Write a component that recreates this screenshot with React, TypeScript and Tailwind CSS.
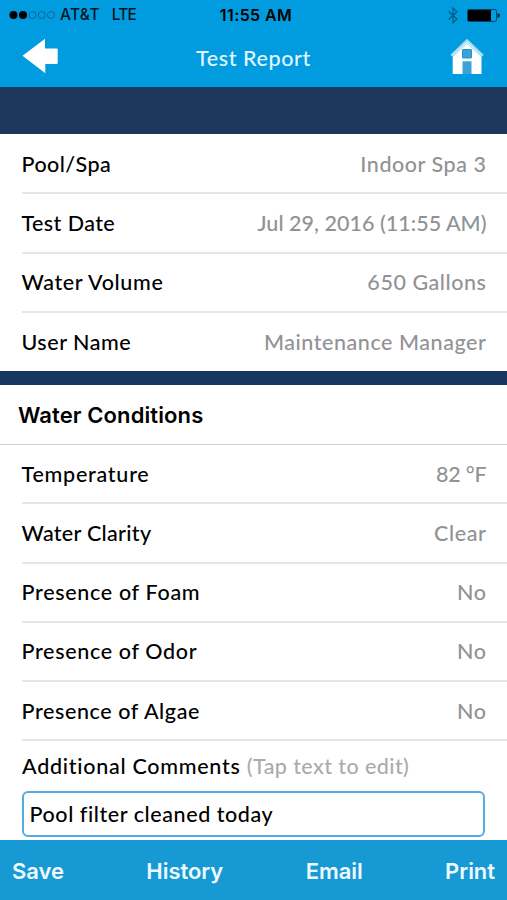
import React, { useState } from 'react';

interface ReportRow {
  label: string;
  value: string;
  labelClass?: string;
  valueClass?: string;
}

const SUMMARY_ROWS: ReportRow[] = [
  { label: 'Pool/Spa', value: 'Indoor Spa 3', labelClass: 'tracking-[0.45px]', valueClass: 'tracking-[0.55px]' },
  { label: 'Test Date', value: 'Jul 29, 2016 (11:55 AM)', labelClass: 'tracking-[0.42px]', valueClass: 'tracking-[0.03px]' },
  { label: 'Water Volume', value: '650 Gallons', labelClass: 'tracking-[0.62px]', valueClass: 'tracking-[0.55px]' },
  { label: 'User Name', value: 'Maintenance Manager', labelClass: 'tracking-[0.52px]', valueClass: 'tracking-[0.56px]' },
];

const CONDITION_ROWS: ReportRow[] = [
  { label: 'Temperature', value: '82 °F', labelClass: 'tracking-[0.75px]', valueClass: 'tracking-[-0.2px]' },
  { label: 'Water Clarity', value: 'Clear', labelClass: 'tracking-[0.3px]', valueClass: 'tracking-[0.6px]' },
  { label: 'Presence of Foam', value: 'No', labelClass: 'tracking-[0.68px]', valueClass: 'tracking-[0.6px]' },
  { label: 'Presence of Odor', value: 'No', labelClass: 'tracking-[0.66px]', valueClass: 'tracking-[0.6px]' },
  { label: 'Presence of Algae', value: 'No', labelClass: 'tracking-[0.6px]', valueClass: 'tracking-[0.6px]' },
];

function StatusBar() {
  return (
    <div className="grid h-[30px] grid-cols-3 items-center pl-[9px] pr-[7px] font-['Inter',sans-serif] text-[15.5px] text-[#04141f]">
      <div className="flex items-center">
        <svg width="46" height="10" viewBox="0 0 46 10">
          <circle cx="4.5" cy="5" r="4" fill="#000" />
          <circle cx="14" cy="5" r="4" fill="#000" />
          <circle cx="23.5" cy="5" r="3.5" fill="none" stroke="#04679a" />
          <circle cx="32.8" cy="5" r="3.5" fill="none" stroke="#04679a" />
          <circle cx="42" cy="5" r="3.5" fill="none" stroke="#04679a" />
        </svg>
        <span className="ml-[5px] tracking-[0.3px]">AT&amp;T</span>
        <span className="ml-[12px] tracking-[-0.9px]">LTE</span>
      </div>
      <span className="whitespace-nowrap pl-[3px] text-center text-[16px] font-semibold tracking-[0.4px] text-black">11:55 AM</span>
      <div className="flex items-center justify-end gap-[9px]">
        <svg width="10" height="17" viewBox="0 0 10 17" fill="none" stroke="#045a87" strokeWidth="1.2">
          <path d="M0.7 4.5 L9 12 L5 16 V1 L9 4.8 L0.7 12.5" />
        </svg>
        <svg width="33" height="13" viewBox="0 0 33 13">
          <rect x="0.5" y="0.5" width="29" height="12" rx="1.8" fill="none" stroke="#04466a" />
          <rect x="1" y="1" width="23" height="11" fill="#000" />
          <path d="M30.5 4 Q33 4.7 33 6.5 T30.5 9 Z" fill="#04263a" />
        </svg>
      </div>
    </div>
  );
}

function NavBar() {
  return (
    <div className="flex h-[57px] items-center justify-between pl-[22px] pr-[22px]">
      <button aria-label="Back" className="-mt-[5px]">
        <svg width="36" height="36" viewBox="0 0 36 36" className="block">
          <path d="M0.5 17.7 L23 0.8 V10.4 H34.5 Q35.7 10.4 35.7 11.6 V24.8 Q35.7 26 34.5 26 H23.3 V35.3 Z" fill="#fff" />
        </svg>
      </button>
      <h1 className="text-[21.5px] font-medium tracking-[0.6px] text-[#e3f6ff]">Test Report</h1>
      <button aria-label="Home" className="-mt-[4px]">
        <svg width="36" height="37" viewBox="0 0 36 37" className="block">
          <path d="M3.7 16 L18 3 L32.5 16 V36 H3.7 Z" fill="#fff" />
          <path d="M2.2 17.6 L18 2.2 L34 17.6" fill="none" stroke="#a5dcf5" strokeWidth="2.2" />
          <path d="M4 18.5 L18 5.3 L32.3 18.5" fill="none" stroke="#7ac8ec" strokeWidth="0.8" />
          <rect x="13.5" y="11.5" width="9" height="8.5" rx="0.5" fill="#3ba3d8" stroke="#1f93cc" />
          <rect x="13.5" y="23.3" width="9" height="12.7" fill="#3ba3d8" />
        </svg>
      </button>
    </div>
  );
}

function Row({ label, value, labelClass = '', valueClass = '', last = false }: ReportRow & { last?: boolean }) {
  return (
    <div className="h-[59.3px] pl-[21.5px]">
      <div className={`flex h-full items-center justify-between pr-[20.5px] ${last ? '' : 'border-b-2 border-[#e6e6e7]'}`}>
        <span className={`whitespace-nowrap text-black ${labelClass}`}>{label}</span>
        <span className={`whitespace-nowrap text-[#929295] ${valueClass}`}>{value}</span>
      </div>
    </div>
  );
}

export default function App() {
  const [comments, setComments] = useState('Pool filter cleaned today');

  return (
    <div className="flex h-[900px] w-[507px] flex-col overflow-hidden bg-white font-['Lato',sans-serif] text-[21.5px] font-medium tracking-[0.3px]">
      <header className="h-[87px] shrink-0 bg-[#009cdf]">
        <StatusBar />
        <NavBar />
      </header>

      <div className="h-[47px] shrink-0 bg-[#1c395d]" />

      <section className="h-[237px] shrink-0 pt-px">
        {SUMMARY_ROWS.map((row, i) => (
          <Row key={row.label} {...row} last={i === SUMMARY_ROWS.length - 1} />
        ))}
      </section>

      <div className="h-[14px] shrink-0 bg-[#18375e]" />

      <section className="shrink-0">
        <h2 className="flex h-[60px] items-center border-b border-[#cfcfd1] pl-[18px] pt-px font-['Inter',sans-serif] text-[22px] font-semibold tracking-[0.1px] text-black">
          Water Conditions
        </h2>
        {CONDITION_ROWS.map((row) => (
          <Row key={row.label} {...row} />
        ))}
      </section>

      <section className="flex-1 pl-[22px] pr-[22px] pt-[10px]">
        <label htmlFor="comments" className="block h-[40px] whitespace-nowrap leading-[30px] tracking-[0.73px] text-black">
          Additional Comments <span className="tracking-[0.42px] text-[#ababad]">(Tap text to edit)</span>
        </label>
        <input
          id="comments"
          value={comments}
          onChange={(e) => setComments(e.target.value)}
          className="block h-[46px] w-full rounded-[6px] border-2 border-[#54ace0] bg-white px-[5.5px] tracking-[0.57px] text-black outline-none"
        />
      </section>

      <footer className="flex h-[60px] shrink-0 items-center justify-between bg-[#1799d4] pl-[12px] pr-[12px] pt-[2px] font-['Inter',sans-serif] text-[22px] font-semibold tracking-[-0.05px] text-[#eef9ff]">
        <button>Save</button>
        <button>History</button>
        <button>Email</button>
        <button>Print</button>
      </footer>
    </div>
  );
}
